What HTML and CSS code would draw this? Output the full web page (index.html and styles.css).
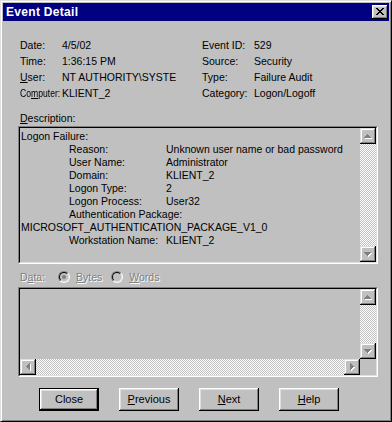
FILE: index.html
```html
<!DOCTYPE html>
<html>
<head>
<meta charset="utf-8">
<link rel="stylesheet" href="styles.css">
</head>
<body>
<div class="window">
  <div class="titlebar">
    <span class="title">Event Detail</span>
    <span class="close-btn">
      <svg width="8" height="7" viewBox="0 0 8 7" shape-rendering="crispEdges"><g fill="#000"><rect x="0" y="0" width="2" height="1"/><rect x="6" y="0" width="2" height="1"/><rect x="1" y="1" width="2" height="1"/><rect x="5" y="1" width="2" height="1"/><rect x="2" y="2" width="4" height="1"/><rect x="3" y="3" width="2" height="1"/><rect x="2" y="4" width="4" height="1"/><rect x="1" y="5" width="2" height="1"/><rect x="5" y="5" width="2" height="1"/><rect x="0" y="6" width="2" height="1"/><rect x="6" y="6" width="2" height="1"/></g></svg>
    </span>
  </div>
  <div class="body">
    <div class="info">
      <span>Date:</span><span>4/5/02</span><span>Event ID:</span><span>529</span>
      <span>Time:</span><span>1:36:15 PM</span><span>Source:</span><span>Security</span>
      <span><u>U</u>ser:</span><span>NT AUTHORITY\SYSTE</span><span>Type:</span><span>Failure Audit</span>
      <span><span class="tight">Co<u>m</u>puter:</span></span><span>KLIENT_2</span><span>Category:</span><span>Logon/Logoff</span>
    </div>
    <div class="label"><u>D</u>escription:</div>
    <div class="box desc-box">
      <div class="box-inner">
        <div class="text">
          <div class="line">Logon Failure:</div>
          <div class="line ind"><span class="k">Reason:</span><span>Unknown user name or bad password</span></div>
          <div class="line ind"><span class="k">User Name:</span><span>Administrator</span></div>
          <div class="line ind"><span class="k">Domain:</span><span>KLIENT_2</span></div>
          <div class="line ind"><span class="k">Logon Type:</span><span>2</span></div>
          <div class="line ind"><span class="k">Logon Process:</span><span>User32</span></div>
          <div class="line ind"><span>Authentication Package:</span></div>
          <div class="line">MICROSOFT_AUTHENTICATION_PACKAGE_V1_0</div>
          <div class="line ind"><span class="k">Workstation Name:</span><span>KLIENT_2</span></div>
        </div>
        <div class="vscroll">
          <span class="sbtn"><svg width="8" height="5" viewBox="0 0 8 5" shape-rendering="crispEdges"><g fill="#fff" transform="translate(1,1)"><rect x="3" y="0" width="1" height="1"/><rect x="2" y="1" width="3" height="1"/><rect x="1" y="2" width="5" height="1"/><rect x="0" y="3" width="7" height="1"/></g><g fill="#808080"><rect x="3" y="0" width="1" height="1"/><rect x="2" y="1" width="3" height="1"/><rect x="1" y="2" width="5" height="1"/><rect x="0" y="3" width="7" height="1"/></g></svg></span>
          <span class="track"></span>
          <span class="sbtn"><svg width="8" height="5" viewBox="0 0 8 5" shape-rendering="crispEdges"><g fill="#fff" transform="translate(1,1)"><rect x="0" y="0" width="7" height="1"/><rect x="1" y="1" width="5" height="1"/><rect x="2" y="2" width="3" height="1"/><rect x="3" y="3" width="1" height="1"/></g><g fill="#808080"><rect x="0" y="0" width="7" height="1"/><rect x="1" y="1" width="5" height="1"/><rect x="2" y="2" width="3" height="1"/><rect x="3" y="3" width="1" height="1"/></g></svg></span>
        </div>
      </div>
    </div>
    <div class="data-row">
      <span class="dis">D<u>a</u>ta:</span>
      <span class="radio checked"></span><span class="dis"><u>B</u>ytes</span>
      <span class="radio"></span><span class="dis"><u>W</u>ords</span>
    </div>
    <div class="box data-box">
      <div class="box-inner grid2">
        <div class="text"></div>
        <div class="vscroll">
          <span class="sbtn"><svg width="8" height="5" viewBox="0 0 8 5" shape-rendering="crispEdges"><g fill="#fff" transform="translate(1,1)"><rect x="3" y="0" width="1" height="1"/><rect x="2" y="1" width="3" height="1"/><rect x="1" y="2" width="5" height="1"/><rect x="0" y="3" width="7" height="1"/></g><g fill="#808080"><rect x="3" y="0" width="1" height="1"/><rect x="2" y="1" width="3" height="1"/><rect x="1" y="2" width="5" height="1"/><rect x="0" y="3" width="7" height="1"/></g></svg></span>
          <span class="track"></span>
          <span class="sbtn"><svg width="8" height="5" viewBox="0 0 8 5" shape-rendering="crispEdges"><g fill="#fff" transform="translate(1,1)"><rect x="0" y="0" width="7" height="1"/><rect x="1" y="1" width="5" height="1"/><rect x="2" y="2" width="3" height="1"/><rect x="3" y="3" width="1" height="1"/></g><g fill="#808080"><rect x="0" y="0" width="7" height="1"/><rect x="1" y="1" width="5" height="1"/><rect x="2" y="2" width="3" height="1"/><rect x="3" y="3" width="1" height="1"/></g></svg></span>
        </div>
        <div class="hscroll">
          <span class="sbtn"><svg width="5" height="8" viewBox="0 0 5 8" shape-rendering="crispEdges"><g fill="#fff" transform="translate(1,1)"><rect x="3" y="0" width="1" height="7"/><rect x="2" y="1" width="1" height="5"/><rect x="1" y="2" width="1" height="3"/><rect x="0" y="3" width="1" height="1"/></g><g fill="#808080"><rect x="3" y="0" width="1" height="7"/><rect x="2" y="1" width="1" height="5"/><rect x="1" y="2" width="1" height="3"/><rect x="0" y="3" width="1" height="1"/></g></svg></span>
          <span class="track"></span>
          <span class="sbtn"><svg width="5" height="8" viewBox="0 0 5 8" shape-rendering="crispEdges"><g fill="#fff" transform="translate(1,1)"><rect x="0" y="0" width="1" height="7"/><rect x="1" y="1" width="1" height="5"/><rect x="2" y="2" width="1" height="3"/><rect x="3" y="3" width="1" height="1"/></g><g fill="#808080"><rect x="0" y="0" width="1" height="7"/><rect x="1" y="1" width="1" height="5"/><rect x="2" y="2" width="1" height="3"/><rect x="3" y="3" width="1" height="1"/></g></svg></span>
        </div>
        <div class="corner"></div>
      </div>
    </div>
    <div class="buttons">
      <span class="btn default">Close</span>
      <span class="btn"><u>P</u>revious</span>
      <span class="btn"><u>N</u>ext</span>
      <span class="btn"><u>H</u>elp</span>
    </div>
  </div>
</div>
</body>
</html>
```
FILE: styles.css
```css
html, body {
  margin: 0;
  padding: 0;
  background: #c0c0c0;
}
body {
  font-family: "Liberation Sans", Arial, sans-serif;
  font-size: 10.5px;
  color: #000;
}
u { text-decoration: underline; text-underline-offset: 1px; }

.window {
  width: 392px;
  height: 422px;
  box-sizing: border-box;
  border: 1px solid;
  border-color: #dfdfdf #000 #000 #dfdfdf;
  box-shadow: inset 1px 1px #fff, inset -1px -1px #808080;
  padding: 2px;
  background: #c0c0c0;
}

.titlebar {
  height: 18px;
  background: #000080;
  display: flex;
  align-items: center;
  justify-content: space-between;
}
.title {
  color: #fff;
  font-weight: bold;
  font-size: 12px;
  padding-left: 3px;
  letter-spacing: 0.3px;
}
.close-btn {
  width: 16px;
  height: 14px;
  box-sizing: border-box;
  margin-right: 1px;
  background: #c0c0c0;
  box-shadow: inset -1px -1px #000, inset 1px 1px #fff, inset -2px -2px #808080, inset 2px 2px #dfdfdf;
  display: flex;
  align-items: center;
  justify-content: center;
  padding: 0 1px 1px 0;
}
.close-btn svg { display: block; }

.body {
  padding: 16px 0 0 15px;
}

.info {
  display: grid;
  grid-template-columns: 42px 140px 52px 1fr;
  grid-auto-rows: 16px;
  align-items: center;
  margin-left: 2px;
  white-space: nowrap;
}
.info .tight {
  display: inline-block;
  transform: scaleX(0.82);
  transform-origin: left center;
}

.label {
  margin: 10px 0 0 2px;
  height: 14px;
  line-height: 14px;
}

.box {
  width: 360px;
  box-sizing: border-box;
  border: 1px solid;
  border-color: #808080 #fff #fff #808080;
}
.box-inner {
  height: 100%;
  box-sizing: border-box;
  border: 1px solid;
  border-color: #000 #dfdfdf #dfdfdf #000;
  display: flex;
}
.desc-box {
  margin-top: 1px;
  height: 138px;
}
.text {
  flex: 1;
  padding: 2px 0 0 1px;
  white-space: nowrap;
  overflow: hidden;
}
.line {
  height: 13px;
  line-height: 13px;
  display: flex;
}
.line.ind { padding-left: 48px; }
.line .k { width: 97px; flex: none; }

.vscroll {
  width: 16px;
  display: flex;
  flex-direction: column;
}
.hscroll {
  height: 16px;
  display: flex;
}
.track {
  flex: 1;
  background-color: #fff;
  background-image: repeating-conic-gradient(#c0c0c0 0 25%, #fff 0 50%);
  background-size: 2px 2px;
}
.sbtn {
  width: 16px;
  height: 16px;
  flex: none;
  box-sizing: border-box;
  background: #c0c0c0;
  box-shadow: inset -1px -1px #000, inset 1px 1px #dfdfdf, inset -2px -2px #808080, inset 2px 2px #fff;
  display: flex;
  align-items: center;
  justify-content: center;
}
.sbtn svg { display: block; }

.data-row {
  margin: 6px 0 0 2px;
  height: 14px;
  display: flex;
  align-items: center;
}
.dis {
  color: #808080;
  text-shadow: 1px 1px #fff;
}
.dis u { text-decoration-color: #808080; }
.data-row .dis:first-child { width: 38px; }
.radio {
  width: 12px;
  height: 12px;
  box-sizing: border-box;
  border-radius: 50%;
  border: 1px solid;
  border-color: #808080 #fff #fff #808080;
  position: relative;
  margin-right: 6px;
  flex: none;
}
.radio::before {
  content: "";
  position: absolute;
  inset: 0;
  border-radius: 50%;
  border: 1px solid;
  border-color: #000 #dfdfdf #dfdfdf #000;
  background: #c0c0c0;
}
.radio.checked::after {
  content: "";
  position: absolute;
  left: 3px;
  top: 3px;
  width: 4px;
  height: 4px;
  border-radius: 50%;
  background: #808080;
}
.data-row .dis:nth-child(3) { margin-right: 9px; }

.data-box {
  margin-top: 3px;
  height: 90px;
}
.grid2 {
  display: grid;
  grid-template-columns: 1fr 16px;
  grid-template-rows: 1fr 16px;
}
.grid2 .text { padding: 0; }
.corner { background: #c0c0c0; }

.buttons {
  display: flex;
  gap: 20px;
  margin: 11px 0 0 21px;
}
.btn {
  width: 60px;
  height: 23px;
  box-sizing: border-box;
  background: #c0c0c0;
  display: flex;
  align-items: center;
  justify-content: center;
  font-size: 11px;
  box-shadow: inset -1px -1px #000, inset 1px 1px #fff, inset -2px -2px #808080, inset 2px 2px #dfdfdf;
  padding-bottom: 1px;
}
.btn.default {
  box-shadow: inset 0 0 0 1px #000, inset -2px -2px #000, inset 2px 2px #fff, inset -3px -3px #808080, inset 3px 3px #dfdfdf;
}
```
